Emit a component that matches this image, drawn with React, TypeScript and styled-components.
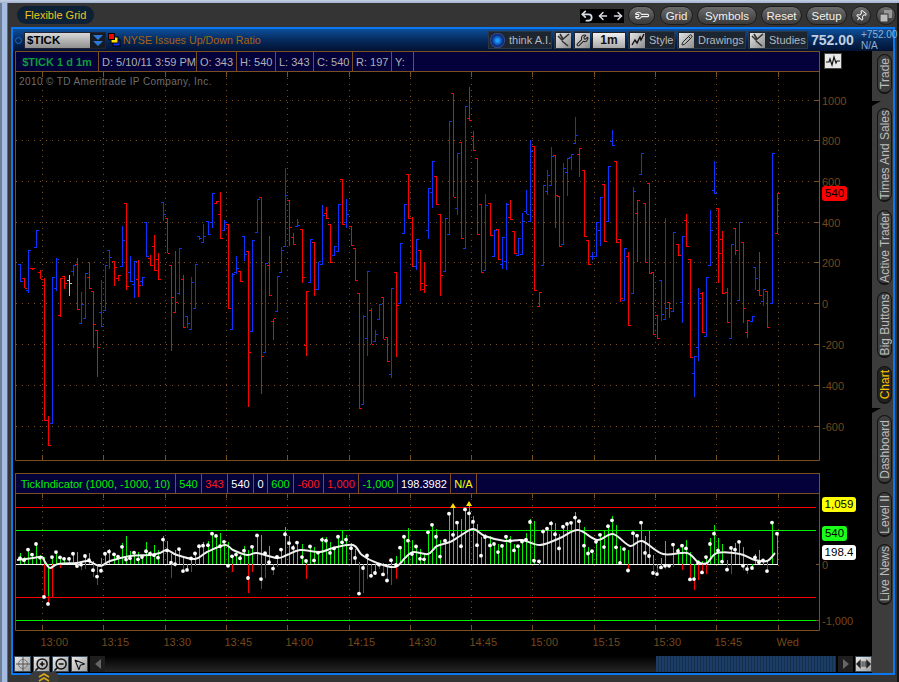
import React from 'react';
import styled, { createGlobalStyle } from 'styled-components';
import { ArrowLeft, ArrowRight, MousePointer2, Pencil, Pin, Undo2, Wrench, ZoomIn, ZoomOut } from 'lucide-react';

type Bar = [number, number, number, number, number, string];

// x, high, low, open, close (3x crop coordinates of the chart), colour
const BARS_A: Bar[] = [
  [16,552,605,552,605,'b'],[28,595,625,595,625,'r'],[40,510,638,632,510,'b'],[52,563,569,565,566,'r'],[65,450,503,503,450,'b'],
  [76,570,597,576,597,'r'],[88,595,1022,617,1022,'r'],[100,1008,1097,1022,1097,'r'],[112,592,1030,1030,592,'b'],[124,535,632,626,538,'b'],
  [136,595,710,705,595,'r'],[148,590,628,590,610,'r'],[163,586,648,602,610,'w'],[176,556,587,574,556,'b'],[188,535,690,552,688,'r'],
  [199,636,731,731,673,'b'],[212,580,716,716,580,'b'],[224,547,626,592,625,'r'],[236,634,804,634,733,'r'],[248,751,890,751,802,'r'],
  [260,600,740,697,740,'b'],[272,556,690,690,556,'b'],[284,510,567,510,533,'b'],[297,545,618,545,562,'r'],[309,586,604,596,586,'r'],
  [322,438,560,560,481,'b'],[334,370,630,370,620,'r'],[347,528,606,577,605,'b'],[359,543,654,613,543,'b'],[371,540,652,599,617,'r'],
  [383,592,618,603,592,'b'],[395,427,530,427,530,'b'],[407,525,558,535,555,'r'],[418,465,573,498,571,'r'],[431,518,600,538,598,'r'],
  [445,367,423,367,404,'b'],[457,415,520,415,520,'r'],[469,556,813,556,652,'r'],[481,513,698,697,667,'r'],[493,505,645,640,505,'b'],
  [505,585,743,598,743,'r'],[517,708,745,708,731,'b'],[529,592,748,748,607,'b'],[542,553,686,686,553,'b'],[554,468,480,468,476,'b'],
  [566,432,490,486,468,'b'],[581,424,464,424,463,'b'],[593,340,444,427,340,'b'],[605,364,372,370,365,'r'],[617,336,476,403,476,'r'],
  [629,421,453,451,427,'b'],[641,433,686,433,686,'r'],[652,580,749,749,582,'b'],[664,528,582,578,566,'b'],[677,574,605,574,605,'r'],
  [688,468,543,468,522,'b'],[701,514,980,514,817,'r'],[713,481,755,755,481,'b'],[726,358,456,456,358,'b'],[739,352,941,352,829,'r'],
  [751,550,816,816,550,'b'],[763,468,647,556,647,'r'],[775,716,780,725,716,'r'],[788,589,695,695,589,'b'],[800,502,578,578,510,'b'],
  [811,265,500,500,346,'b'],[823,360,497,361,443,'r'],[836,458,494,472,494,'r'],[848,418,440,439,436,'b'],[862,448,608,448,593,'r'],
  [875,634,828,796,634,'r'],[887,478,608,608,478,'b'],[898,487,648,487,628,'r'],
];

const BARS_B: Bar[] = [
  [10,545,627,627,545,'b'],[22,376,555,553,406,'b'],[34,381,416,400,415,'r'],[46,433,548,433,548,'r'],[58,499,527,527,499,'b'],
  [70,373,515,515,373,'b'],[82,298,434,298,433,'r'],[94,358,443,428,403,'b'],[108,439,497,439,496,'r'],[122,505,602,505,601,'r'],
  [133,640,986,640,986,'r'],[145,706,974,974,708,'b'],[157,574,828,775,574,'b'],[169,685,793,691,793,'r'],[181,750,785,785,763,'b'],
  [193,673,718,718,673,'b'],[205,652,778,652,778,'r'],[217,771,845,771,845,'r'],[229,625,893,883,625,'b'],[244,577,830,577,676,'r'],
  [256,490,670,670,490,'b'],[269,373,461,461,373,'b'],[281,283,416,283,415,'r'],[292,411,560,427,558,'r'],[304,478,570,558,478,'b'],
  [316,509,633,511,610,'r'],[328,547,639,628,616,'r'],[340,325,476,451,325,'b'],[352,244,384,337,244,'b'],[364,289,375,289,373,'r'],
  [376,404,648,404,586,'r'],[390,415,575,575,415,'b'],[403,124,463,463,124,'b'],[415,40,352,40,352,'r'],[427,220,405,385,220,'b'],
  [439,187,476,187,475,'r'],[451,79,506,506,79,'b'],[463,22,122,115,121,'r'],[475,154,212,169,211,'r'],[487,235,464,235,463,'r'],
  [499,373,578,373,577,'r'],[511,343,572,571,376,'b'],[526,370,467,370,466,'r'],[538,451,530,529,451,'b'],[550,448,540,448,538,'r'],
  [562,472,567,553,472,'b'],[574,370,569,544,373,'b'],[586,361,419,412,418,'r'],[598,454,521,454,520,'r'],[610,475,527,526,475,'b'],
  [622,400,524,523,425,'b'],[634,331,403,394,403,'b'],[646,180,425,424,214,'b'],[658,199,632,199,631,'r'],[673,637,682,679,637,'r'],
  [685,316,556,556,316,'b'],[697,270,345,334,286,'b'],[709,202,317,316,229,'b'],[721,226,444,226,346,'r'],[733,349,500,349,499,'r'],
  [745,250,495,493,265,'b'],
];

const BARS_C: Bar[] = [
  [7,175,287,217,175,'b'],[19,163,210,173,163,'b'],[31,52,131,130,106,'b'],[43,145,230,163,145,'r'],[58,211,411,211,410,'r'],
  [70,421,494,421,493,'r'],[82,457,480,469,469,'b'],[94,367,470,470,367,'b'],[106,292,438,391,292,'b'],[118,253,425,253,424,'r'],
  [130,199,365,364,199,'b'],[142,91,137,125,136,'b'],[154,184,428,184,427,'r'],[166,418,605,418,596,'r'],[178,445,601,601,445,'b'],
  [190,457,677,469,676,'r'],[205,262,581,580,274,'b'],[217,301,486,340,301,'r'],[229,160,224,223,160,'b'],[241,310,488,310,487,'r'],
  [253,250,521,250,520,'r'],[265,515,706,518,704,'r'],[277,646,716,646,715,'r'],[289,541,663,541,643,'b'],[301,355,659,657,625,'b'],
  [313,607,654,607,625,'r'],[325,397,635,633,397,'b'],[340,433,467,433,466,'r'],[352,409,668,607,409,'b'],[364,343,440,361,439,'r'],
  [376,478,773,478,772,'r'],[388,769,890,820,769,'b'],[400,564,783,742,595,'b'],[412,577,698,580,697,'r'],[424,532,710,709,532,'b'],
  [436,331,497,496,391,'b'],[448,184,281,271,280,'b'],[460,325,549,325,460,'r'],[472,393,581,418,580,'r'],[487,565,668,577,667,'r'],
  [499,433,716,715,433,'b'],[511,385,464,385,451,'r'],[523,367,602,601,367,'b'],[535,427,668,427,625,'r'],[547,660,714,697,660,'r'],
  [562,649,665,664,649,'b'],[571,502,570,502,535,'b'],[583,457,587,571,586,'r'],[595,568,617,604,568,'b'],[607,574,683,574,682,'r'],
  [622,160,610,610,160,'b'],[637,280,401,400,280,'r'],
];

const toScreen = (bars: Bar[], ox: number, oy: number) =>
  bars.map(([x, h, l, o, c, col]) => ({
    x: Math.floor(ox + x / 3) + 0.5,
    h: oy + h / 3,
    l: oy + l / 3,
    o: Math.floor(oy + o / 3) + 0.5,
    c: Math.floor(oy + c / 3) + 0.5,
    col: col === 'b' ? '#0a35ff' : col === 'r' ? '#ff0000' : '#c8c8c8',
  }));

const bars = [...toScreen(BARS_A, 15, 80), ...toScreen(BARS_B, 315, 80), ...toScreen(BARS_C, 565, 100)];

const toLower = (y: number) => 564.3 - (303.3 - y) * (56.7 / 203.5);

// average line of the indicator, traced from the picture
const AVG = [
  [17,560],[33,558],[42,557],[45,562],[50,568],[58,564],[77,563],[88,561],[100,566],[110,561],[130,556],[150,555],[160,553],[167,550],
  [177,555],[195,559],[207,552],[225,545],[233,550],[247,555],[257,553],[277,558],[287,555],[300,550],[320,552],[333,548],[353,545],
  [362,555],[377,563],[395,567],[405,558],[413,552],[428,554],[437,546],[450,542],[460,536],[473,529],[485,536],[505,541],[522,540],
  [540,545],[560,538],[578,530],[597,540],[613,534],[630,546],[642,541],[663,554],[687,553],[698,562],[707,563],[717,553],[740,554],
  [755,560],[767,561],[775,553],
];

const smooth = (pts: number[][]) => {
  let d = `M${pts[0][0]} ${pts[0][1]}`;
  for (let i = 0; i < pts.length - 1; i++) {
    const p0 = pts[Math.max(0, i - 1)];
    const p1 = pts[i];
    const p2 = pts[i + 1];
    const p3 = pts[Math.min(pts.length - 1, i + 2)];
    d += ` C${p1[0] + (p2[0] - p0[0]) / 6} ${p1[1] + (p2[1] - p0[1]) / 6} ${p2[0] - (p3[0] - p1[0]) / 6} ${p2[1] - (p3[1] - p1[1]) / 6} ${p2[0]} ${p2[1]}`;
  }
  return d;
};

const TIME_X = [42, 103, 165, 226, 287, 349, 410, 471, 532, 594, 655, 716, 778];
const TIME_LABELS = ['13:00', '13:15', '13:30', '13:45', '14:00', '14:15', '14:30', '14:45', '15:00', '15:15', '15:30', '15:45', 'Wed'];
const PRICE_ROWS: [number, string][] = [[100,'1000'],[140,'800'],[181,'600'],[222,'400'],[262,'200'],[303,'0'],[344,'-200'],[385,'-400'],[426,'-600']];

const GlobalStyle = createGlobalStyle`
  html, body { margin: 0; padding: 0; background: #222; }
  body { font-family: "Liberation Sans", Arial, sans-serif; }
`;

export default function App() {
  return (
    <Page>
      <GlobalStyle />
      <TopEdge />
      <Frame>
        <LeftEdge />
        <Shell>
          <TopBar>
            <GridPill>Flexible Grid</GridPill>
            <TopActions>
              <HistoryBox>
                <Undo2 size={14} strokeWidth={3} />
                <ArrowLeft size={12} strokeWidth={3} />
                <ArrowRight size={12} strokeWidth={3} />
              </HistoryBox>
              <PillButton $w={27}><Wrench size={13} style={{ transform: 'rotate(-135deg)' }} /></PillButton>
              <PillButton $w={33} $ml={5}>Grid</PillButton>
              <PillButton $w={60} $ml={4}>Symbols</PillButton>
              <PillButton $w={41} $ml={4}>Reset</PillButton>
              <PillButton $w={41} $ml={4}>Setup</PillButton>
              <PillButton $w={20} $ml={4}><Pin size={12} style={{ transform: 'rotate(40deg)' }} /></PillButton>
              <PillButton $w={20} $ml={5}><CopyGlyph /></PillButton>
            </TopActions>
          </TopBar>

          <Workspace>
            <SymbolBar>
              <LinkDot />
              <SymbolBox>
                <SymbolName>$TICK</SymbolName>
                <SymbolDrop>
                  <svg width="12" height="14" viewBox="0 0 12 14">
                    <path d="M1 2h10L6 7z M1 8h10l-5 5z" fill="#2a78d8" />
                  </svg>
                </SymbolDrop>
              </SymbolBox>
              <LinkSquares>
                <svg width="13" height="14" viewBox="0 0 13 14">
                  <rect x="5" y="7" width="7" height="6" fill="#1030ff" stroke="#000" />
                  <rect x="3" y="4" width="7" height="6" fill="#ffe000" stroke="#000" />
                  <rect x="0.5" y="0.5" width="6" height="6" fill="#ff0000" stroke="#000" />
                </svg>
              </LinkSquares>
              <SymbolTitle>NYSE Issues Up/Down Ratio</SymbolTitle>
              <ToolStrip>
                <ToolGroup $w={64}>
                  <Globe />
                  <ToolLabel>think A.I.</ToolLabel>
                </ToolGroup>
                <ToolGroup $w={17}><IconSquare><StudyGlyph /></IconSquare></ToolGroup>
                <ToolGroup $w={17}><IconSquare><Wrench size={13} color="#222" /></IconSquare></ToolGroup>
                <PeriodButton>1m</PeriodButton>
                <ToolGroup $w={47}>
                  <IconSquare>
                    <svg width="14" height="14" viewBox="0 0 14 14"><path d="M1 12l3-5 2 3 3-6 1 3 3-6" fill="none" stroke="#111" strokeWidth="1.4" /></svg>
                  </IconSquare>
                  <ToolLabel>Style</ToolLabel>
                </ToolGroup>
                <ToolGroup $w={69}>
                  <IconSquare><Pencil size={12} color="#222" /></IconSquare>
                  <ToolLabel>Drawings</ToolLabel>
                </ToolGroup>
                <ToolGroup $w={60}>
                  <IconSquare><StudyGlyph /></IconSquare>
                  <ToolLabel>Studies</ToolLabel>
                </ToolGroup>
              </ToolStrip>
              <LastPrice>752.00</LastPrice>
              <PriceChange>
                <span>+752.00</span>
                <span>N/A</span>
              </PriceChange>
            </SymbolBar>

            <Columns>
              <ChartColumn>
                <PaneHead>
                  <InfoRow>
                    <InfoCell $w={83} $center $color="#0c9c3a" $bold>$TICK 1 d 1m</InfoCell>
                    <InfoCell $w={98}>D: 5/10/11 3:59 PM</InfoCell>
                    <InfoCell $w={40}>O: 343</InfoCell>
                    <InfoCell $w={39}>H: 540</InfoCell>
                    <InfoCell $w={38}>L: 343</InfoCell>
                    <InfoCell $w={39}>C: 540</InfoCell>
                    <InfoCell $w={39}>R: 197</InfoCell>
                    <InfoCell $w={22}>Y:</InfoCell>
                  </InfoRow>
                  <ChartToggle>
                    <svg width="14" height="12" viewBox="0 0 14 12">
                      <path d="M0 7h3l1-3 2 6 2-8 2 6 1-2h3" fill="none" stroke="#111" strokeWidth="1.2" />
                    </svg>
                  </ChartToggle>
                </PaneHead>

                <PlotWrap $h={390}>
                  <Copyright>2010 © TD Ameritrade IP Company, Inc.</Copyright>
                  <PlotSvg width="857" height="390" viewBox="15 71 857 390">
                    {PRICE_ROWS.map(([y]) => (
                      <React.Fragment key={y}>
                        <GridDots x1="16" x2="815" y1={y + 0.5} y2={y + 0.5} />
                        <FrameLine x1="815" x2="819" y1={y + 0.5} y2={y + 0.5} />
                      </React.Fragment>
                    ))}
                    {TIME_X.map((x) => (
                      <React.Fragment key={x}>
                        <GridDots x1={x + 0.5} x2={x + 0.5} y1="78" y2="456" />
                        <FrameLine x1={x + 0.5} x2={x + 0.5} y1="71" y2="77" />
                        <FrameLine x1={x + 0.5} x2={x + 0.5} y1="455" y2="460" />
                      </React.Fragment>
                    ))}
                    <FrameLine x1="15.5" x2="15.5" y1="71" y2="460.5" />
                    <FrameLine x1="15.5" x2="819.5" y1="460.5" y2="460.5" />
                    <FrameLine x1="819.5" x2="819.5" y1="71" y2="460.5" />
                    {bars.map((b, i) => (
                      <path
                        key={i}
                        d={`M${b.x} ${b.h}V${b.l}M${b.x - 2.5} ${b.o}H${b.x}M${b.x} ${b.c}H${b.x + 2.5}`}
                        stroke={b.col}
                        fill="none"
                        shapeRendering="crispEdges"
                      />
                    ))}
                    {PRICE_ROWS.map(([y, label]) => (
                      <AxisText key={label} x="822" y={y + 4.5}>{label}</AxisText>
                    ))}
                  </PlotSvg>
                  <ValueBadge $top={115} $w={25} $bg="#ff0000">540</ValueBadge>
                </PlotWrap>

                <PaneHead $mt={12}>
                  <InfoRow>
                    <InfoCell $w={160} $center $color="#00f000">TickIndicator (1000, -1000, 10)</InfoCell>
                    <InfoCell $w={26} $center $color="#00f000">540</InfoCell>
                    <InfoCell $w={26} $center $color="#ff1a1a">343</InfoCell>
                    <InfoCell $w={26} $center $color="#ffffff">540</InfoCell>
                    <InfoCell $w={14} $center $color="#ffffff">0</InfoCell>
                    <InfoCell $w={26} $center $color="#00f000">600</InfoCell>
                    <InfoCell $w={30} $center $color="#ff1a1a">-600</InfoCell>
                    <InfoCell $w={35} $center $color="#ff1a1a">1,000</InfoCell>
                    <InfoCell $w={39} $center $color="#00f000">-1,000</InfoCell>
                    <InfoCell $w={53} $center $color="#ffffff">198.3982</InfoCell>
                    <InfoCell $w={26} $center $color="#ffff00">N/A</InfoCell>
                  </InfoRow>
                </PaneHead>

                <PlotWrap $h={163}>
                  <PlotSvg width="857" height="163" viewBox="15 493 857 163">
                    {TIME_X.map((x, i) => (
                      <React.Fragment key={x}>
                        <GridDots x1={x + 0.5} x2={x + 0.5} y1="499" y2="625" />
                        <FrameLine x1={x + 0.5} x2={x + 0.5} y1="493" y2="498" />
                        <FrameLine x1={x + 0.5} x2={x + 0.5} y1="625" y2="630" />
                        <AxisText x={x - 1.5} y="646">{TIME_LABELS[i]}</AxisText>
                      </React.Fragment>
                    ))}
                    <FrameLine x1="15.5" x2="15.5" y1="493" y2="630.5" />
                    <FrameLine x1="15.5" x2="819.5" y1="630.5" y2="630.5" />
                    <FrameLine x1="819.5" x2="819.5" y1="493" y2="630.5" />
                    <LevelLine x1="16" x2="816" y1="507.5" y2="507.5" stroke="#ff0000" />
                    <LevelLine x1="16" x2="816" y1="530.5" y2="530.5" stroke="#00f000" />
                    <LevelLine x1="16" x2="816" y1="597.5" y2="597.5" stroke="#ff0000" />
                    <LevelLine x1="16" x2="816" y1="620.5" y2="620.5" stroke="#00f000" />
                    <FrameLine x1="816" x2="819" y1="564.5" y2="564.5" />
                    <FrameLine x1="816" x2="819" y1="620.5" y2="620.5" />
                    <LevelLine x1="16" x2="778" y1="564.5" y2="564.5" stroke="#ffffff" />
                    {bars.map((b, i) => (
                      <React.Fragment key={i}>
                        {toLower(b.l) > 564.3 && <StemLine x1={b.x} x2={b.x} y1="564.3" y2={toLower(b.l)} stroke="#ff0000" />}
                        <StemLine x1={b.x} x2={b.x} y1="564.3" y2={toLower(b.h)} stroke="#00f000" />
                      </React.Fragment>
                    ))}
                    <AvgPath d={smooth(AVG)} />
                    {bars.map((b, i) => (
                      <circle key={i} cx={b.x - 0.5} cy={toLower(b.c)} r="1.9" fill="#fff" />
                    ))}
                    <path d="M453 503l3 5h-6z M469 501l3 5h-6z" fill="#ffe000" />
                    <AxisText x="822" y="569">0</AxisText>
                    <AxisText x="822" y="625">-1,000</AxisText>
                  </PlotSvg>
                  <ValueBadge $top={4} $w={34} $bg="#ffff00">1,059</ValueBadge>
                  <ValueBadge $top={33} $w={25} $bg="#19ff19">540</ValueBadge>
                  <ValueBadge $top={52} $w={34} $bg="#ffffff">198.4</ValueBadge>
                </PlotWrap>

                <ScrollRow>
                  <SilverButton>
                    <svg width="14" height="14" viewBox="0 0 14 14">
                      <circle cx="7" cy="7" r="4.5" fill="none" stroke="#777" />
                      <path d="M7 0v14M0 7h14" stroke="#555" />
                    </svg>
                  </SilverButton>
                  <SilverButton $ml={2}><ZoomIn size={15} color="#111" strokeWidth={2.4} style={{ transform: 'scaleX(-1)' }} /></SilverButton>
                  <SilverButton $ml={2}><ZoomOut size={15} color="#111" strokeWidth={2.4} style={{ transform: 'scaleX(-1)' }} /></SilverButton>
                  <SilverButton $ml={2}><MousePointer2 size={13} color="#111" /></SilverButton>
                  <ScrollArrow $ml={2}>
                    <svg width="6" height="10" viewBox="0 0 6 10"><path d="M6 0v10L0 5z" fill="#666" /></svg>
                  </ScrollArrow>
                  <ScrollTrack>
                    <ScrollThumb />
                  </ScrollTrack>
                  <ScrollArrow $ml={2}>
                    <svg width="6" height="10" viewBox="0 0 6 10"><path d="M0 0v10l6-5z" fill="#666" /></svg>
                  </ScrollArrow>
                  <SilverButton $ml={2}>
                    <svg width="16" height="10" viewBox="0 0 16 10">
                      <path d="M5 0v10L0 5z M11 0v10l5-5z M6 2h1v6H6z M8 2h1v6H8z M10 2h0.8v6H10z" fill="#222" />
                    </svg>
                  </SilverButton>
                </ScrollRow>
              </ChartColumn>

              <SideTabs>
                <SideTab $h={40} $mt={3}><TabLabel>Trade</TabLabel></SideTab>
                <SideTab $h={94} $mt={14} $notch><TabLabel>Times And Sales</TabLabel></SideTab>
                <SideTab $h={75} $mt={8}><TabLabel>Active Trader</TabLabel></SideTab>
                <SideTab $h={66} $mt={7}><TabLabel>Big Buttons</TabLabel></SideTab>
                <SideTab $h={38} $mt={8} $active><TabLabel>Chart</TabLabel></SideTab>
                <SideTab $h={69} $mt={11} $notch><TabLabel>Dashboard</TabLabel></SideTab>
                <SideTab $h={45} $mt={8}><TabLabel>Level II</TabLabel></SideTab>
                <SideTab $h={61} $mt={7}><TabLabel>Live News</TabLabel></SideTab>
              </SideTabs>
            </Columns>
          </Workspace>
          <BottomTab>
            <svg width="12" height="9" viewBox="0 0 12 9">
              <path d="M1 4l5-3 5 3M1 8l5-3 5 3" fill="none" stroke="#d8a818" strokeWidth="1.6" />
            </svg>
          </BottomTab>
        </Shell>
      </Frame>
    </Page>
  );
}

const CopyGlyph = () => (
  <svg width="12" height="12" viewBox="0 0 12 12">
    <rect x="4" y="0" width="8" height="8" fill="#999" />
    <rect x="0" y="4" width="8" height="8" fill="#bbb" stroke="#333" />
  </svg>
);

const StudyGlyph = () => (
  <svg width="14" height="14" viewBox="0 0 14 14">
    <path d="M1 3l4 4 7-6M3 1l3 5M5 8l6 5" fill="none" stroke="#333" strokeWidth="1.6" />
  </svg>
);

const Page = styled.div`
  width: 899px;
  height: 682px;
  overflow: hidden;
  display: flex;
  flex-direction: column;
  background: #2a2a2a;
`;

const TopEdge = styled.div`
  height: 3px;
  flex: none;
  background: linear-gradient(#c6d2e4, #9fb2cf);
`;

const Frame = styled.div`
  flex: 1;
  display: flex;
  min-height: 0;
`;

const LeftEdge = styled.div`
  width: 8px;
  flex: none;
  background: linear-gradient(90deg, #6f7f96 0 2px, #a5bde2 2px 7px, #5a6a80 7px);
`;

const Shell = styled.div`
  flex: 1;
  position: relative;
  display: flex;
  flex-direction: column;
  background: #343434;
  padding: 0 2px 7px 3px;
  border-right: 2px solid #151515;
`;

const TopBar = styled.div`
  height: 24px;
  flex: none;
  box-sizing: border-box;
  display: flex;
  align-items: flex-start;
  justify-content: space-between;
  padding: 3px 0 0 6px;
`;

const GridPill = styled.div`
  width: 77px;
  height: 18px;
  box-sizing: border-box;
  display: flex;
  align-items: center;
  justify-content: center;
  border-radius: 9px;
  background: #0c2036;
  color: #f2c41c;
  font-size: 11px;
`;

const TopActions = styled.div`
  display: flex;
  align-items: center;
  height: 19px;
  margin-right: -1px;
`;

const HistoryBox = styled.div`
  width: 44px;
  height: 14px;
  margin-right: 4px;
  background: #000;
  color: #d8dde6;
  display: flex;
  align-items: center;
  justify-content: center;
  gap: 3px;
`;

const PillButton = styled.div<{ $w: number; $ml?: number }>`
  width: ${(p) => p.$w}px;
  height: 19px;
  margin-left: ${(p) => p.$ml ?? 0}px;
  box-sizing: border-box;
  border-radius: 10px;
  border: 1px solid #1c1c1c;
  background: linear-gradient(#6c6c6c, #555 45%, #3a3a3a);
  color: #f0f0f0;
  font-size: 11.5px;
  display: flex;
  align-items: center;
  justify-content: center;
`;

const Workspace = styled.div`
  flex: 1;
  min-height: 0;
  display: flex;
  flex-direction: column;
  border: 2px solid #0a78f0;
`;

const SymbolBar = styled.div`
  height: 22px;
  flex: none;
  display: flex;
  align-items: center;
  padding-left: 2px;
  background: linear-gradient(#0c4f9a, #062a5c 50%, #021233);
`;

const LinkDot = styled.div`
  width: 5px;
  height: 5px;
  border: 1px solid #1a6ad0;
  border-radius: 50%;
  margin-right: 2px;
`;

const SymbolBox = styled.div`
  width: 82px;
  height: 17px;
  display: flex;
  box-sizing: border-box;
  border: 1px solid #223;
`;

const SymbolName = styled.div`
  flex: 1;
  background: linear-gradient(#d8d8d8, #909090);
  color: #000;
  font-size: 11.5px;
  font-weight: bold;
  line-height: 15px;
  padding-left: 2px;
`;

const SymbolDrop = styled.div`
  width: 15px;
  background: #161a22;
  display: flex;
  align-items: center;
  justify-content: center;
`;

const LinkSquares = styled.div`
  margin-left: 2px;
  display: flex;
`;

const SymbolTitle = styled.div`
  margin-left: 2px;
  color: #a8650e;
  font-size: 10.7px;
  flex: 1;
  white-space: nowrap;
`;

const ToolStrip = styled.div`
  display: flex;
  gap: 2px;
  align-items: center;
`;

const ToolGroup = styled.div<{ $w: number }>`
  width: ${(p) => p.$w}px;
  height: 18px;
  box-sizing: border-box;
  background: #1d2530;
  border: 1px solid #2c3644;
  display: flex;
  align-items: center;
  padding-left: 1px;
`;

const IconSquare = styled.div`
  width: 15px;
  height: 15px;
  flex: none;
  background: linear-gradient(135deg, #e4e4e4, #8c8c8c);
  display: flex;
  align-items: center;
  justify-content: center;
`;

const Globe = styled.div`
  width: 15px;
  height: 15px;
  flex: none;
  border-radius: 50%;
  background: radial-gradient(circle, #1c9cff 0 12%, #08247a 55%, #99a 90%);
`;

const ToolLabel = styled.span`
  margin-left: 4px;
  color: #b4b8be;
  font-size: 11px;
  white-space: nowrap;
`;

const PeriodButton = styled.div`
  width: 34px;
  height: 17px;
  box-sizing: border-box;
  border: 1px solid #222;
  background: linear-gradient(#f0f0f0, #a8a8a8);
  color: #111;
  font-size: 12px;
  font-weight: bold;
  display: flex;
  align-items: center;
  justify-content: center;
`;

const LastPrice = styled.div`
  width: 44px;
  margin-left: 3px;
  color: #c0d0e0;
  font-size: 14px;
  font-weight: bold;
`;

const PriceChange = styled.div`
  width: 32px;
  margin-left: 6px;
  display: flex;
  flex-direction: column;
  color: #8fb0d0;
  font-size: 10px;
  line-height: 11px;
  white-space: nowrap;
`;

const Columns = styled.div`
  flex: 1;
  min-height: 0;
  display: flex;
`;

const ChartColumn = styled.div`
  width: 859px;
  flex: none;
  background: #000;
  display: flex;
  flex-direction: column;
`;

const PaneHead = styled.div<{ $mt?: number }>`
  height: 20px;
  flex: none;
  margin: ${(p) => p.$mt ?? 0}px 0 0 2px;
  display: flex;
`;

const InfoRow = styled.div`
  width: 805px;
  flex: none;
  box-sizing: border-box;
  height: 21px;
  display: flex;
  background: #03003a;
  border: 1px solid #7a5020;
`;

const InfoCell = styled.div<{ $w: number; $center?: boolean; $color?: string; $bold?: boolean }>`
  width: ${(p) => p.$w}px;
  flex: none;
  box-sizing: border-box;
  border-right: 1px solid #7a5020;
  display: flex;
  align-items: center;
  justify-content: ${(p) => (p.$center ? 'center' : 'flex-start')};
  padding-left: ${(p) => (p.$center ? 0 : 3)}px;
  color: ${(p) => p.$color ?? '#b0b0b0'};
  font-size: 11px;
  font-weight: ${(p) => (p.$bold ? 'bold' : 'normal')};
  white-space: nowrap;
`;

const ChartToggle = styled.div`
  width: 18px;
  height: 16px;
  margin: 2px 0 0 4px;
  box-sizing: border-box;
  background: #e8e8e8;
  border: 1px solid #444;
  display: flex;
  align-items: center;
  justify-content: center;
`;

const PlotWrap = styled.div<{ $h: number }>`
  position: relative;
  height: ${(p) => p.$h}px;
  margin-left: 2px;
  flex: none;
`;

const PlotSvg = styled.svg`
  display: block;
`;

const Copyright = styled.div`
  position: absolute;
  left: 4px;
  top: 5px;
  color: #6e6e6e;
  font-size: 10px;
  letter-spacing: 0.4px;
  white-space: nowrap;
`;

const GridDots = styled.line`
  stroke: #7a5020;
  stroke-dasharray: 1 5;
`;

const FrameLine = styled.line`
  stroke: #7a5020;
`;

const AxisText = styled.text`
  fill: #74481a;
  font-size: 11px;
  font-family: "Liberation Sans", Arial, sans-serif;
`;

const LevelLine = styled.line`
  stroke-width: 1;
`;

const StemLine = styled.line`
  stroke-width: 1;
  shape-rendering: crispEdges;
`;

const AvgPath = styled.path`
  fill: none;
  stroke: #f0f0f0;
  stroke-width: 2;
`;

const ValueBadge = styled.div<{ $top: number; $w: number; $bg: string }>`
  position: absolute;
  left: 807px;
  top: ${(p) => p.$top}px;
  width: ${(p) => p.$w}px;
  height: 15px;
  border-radius: 3px;
  background: ${(p) => p.$bg};
  color: #000;
  font-size: 11.5px;
  line-height: 15px;
  text-align: center;
`;

const ScrollRow = styled.div`
  height: 16px;
  flex: none;
  display: flex;
  align-items: stretch;
  padding-left: 1px;
`;

const SilverButton = styled.div<{ $ml?: number }>`
  width: 17px;
  flex: none;
  margin-left: ${(p) => p.$ml ?? 0}px;
  box-sizing: border-box;
  border: 1px solid #3a4a5a;
  background: linear-gradient(135deg, #e8e8e8, #a0a0a0);
  display: flex;
  align-items: center;
  justify-content: center;
`;

const ScrollArrow = styled.div<{ $ml?: number }>`
  width: 15px;
  flex: none;
  margin-left: ${(p) => p.$ml ?? 0}px;
  background: #1e1e1e;
  display: flex;
  align-items: center;
  justify-content: center;
`;

const ScrollTrack = styled.div`
  flex: 1;
  display: flex;
  justify-content: flex-end;
  background: linear-gradient(#000, #262626);
`;

const ScrollThumb = styled.div`
  width: 180px;
  background: repeating-linear-gradient(90deg, #1c3c66 0 2px, #14304f 2px 3px);
`;

const SideTabs = styled.div`
  flex: 1;
  display: flex;
  flex-direction: column;
  padding-left: 5px;
  background: #3c3c3c;
`;

const SideTab = styled.div<{ $h: number; $mt: number; $active?: boolean; $notch?: boolean }>`
  position: relative;
  width: 15px;
  height: ${(p) => p.$h}px;
  margin-top: ${(p) => p.$mt}px;
  flex: none;
  box-sizing: border-box;
  border-radius: 8px;
  border: 1px solid #141414;
  border-bottom-width: 2px;
  background: ${(p) => (p.$active ? '#222' : '#3e3e3e')};
  color: ${(p) => (p.$active ? '#ffc400' : '#bdbdbd')};
  display: flex;
  align-items: center;
  justify-content: center;

  ${(p) =>
    p.$notch &&
    `&::before {
      content: '';
      position: absolute;
      left: -6px;
      bottom: calc(100% + 3px);
      width: 9px;
      height: 5px;
      background: #000;
      clip-path: polygon(0 0, 100% 0, 0 100%);
    }`}
`;

const TabLabel = styled.span`
  font-size: 12px;
  writing-mode: vertical-rl;
  transform: rotate(180deg);
  white-space: nowrap;
`;

const BottomTab = styled.div`
  position: absolute;
  left: 22px;
  bottom: 0;
  width: 28px;
  height: 10px;
  background: #3a3a3a;
  border-radius: 4px 4px 0 0;
  display: flex;
  align-items: center;
  justify-content: center;
`;
